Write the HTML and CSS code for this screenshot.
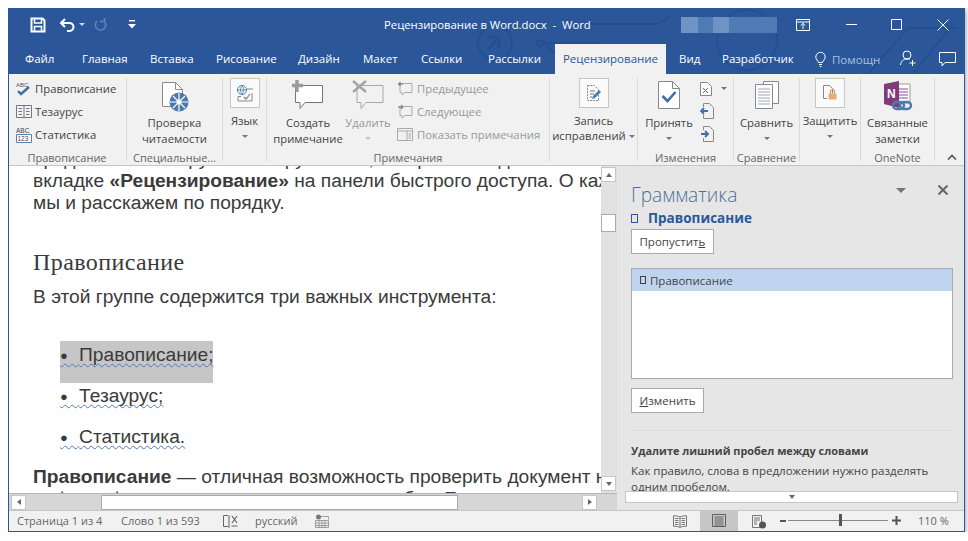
FILE: index.html
```html
<!DOCTYPE html>
<html lang="ru">
<head>
  <meta charset="UTF-8">
  <title>Рецензирование в Word.docx - Word</title>
  <link rel="stylesheet" href="styles.css">
</head>
<body>
  <div class="window">
    <svg class="circuit" viewBox="0 0 957 66" width="957" height="66" fill="none" stroke="#23508f" stroke-width="2">
      <circle cx="487" cy="35" r="17"/>
      <path d="M480 42l10-12M480 29h11v11" stroke-width="3"/>
      <circle cx="532" cy="35" r="3"/>
      <path d="M535 35h60M570 16h80l12-8M535 35l12 10"/>
      <circle cx="739" cy="32" r="30"/>
      <path d="M860 66l40-46h50M905 66l40-50"/>
    </svg>

    <div class="titlebar">
      <div class="quick">
        <svg width="16" height="16" viewBox="0 0 16 16" fill="none" stroke="#fff" stroke-width="2"><path d="M1.500 1.500h11l2 2v11h-13z"/><path d="M4.500 2v4h7V2M4.500 15V9.500h7V15" stroke-width="1.500"/></svg>
        <svg class="q-undo" width="17" height="14" viewBox="0 0 17 14" fill="none" stroke="#fff" stroke-width="2"><path d="M6 1L2 5l4 4"/><path d="M2 5h8a4 4 0 0 1 1 8H8"/></svg>
        <span class="q-caret"></span>
        <svg class="q-redo" width="14" height="14" viewBox="0 0 14 14" fill="none" stroke="#5f83b6" stroke-width="1.600"><path d="M3 3a5.200 5.200 0 1 0 7 0"/><path d="M6 3.500h4.500V0"/></svg>
        <svg class="q-more" width="8" height="9" viewBox="0 0 8 9" fill="#fff"><rect x="1" y="0" width="6" height="1.400"/><path d="M0 4h8L4 8.500z"/></svg>
      </div>
      <div class="doc-title">Рецензирование в Word.docx&nbsp; -&nbsp; Word</div>
      <div class="account">
        <i class="blur b1"></i><i class="blur b2"></i><i class="blur b3"></i><i class="blur b4"></i>
      </div>
      <div class="win-btns">
        <svg width="14" height="12" viewBox="0 0 14 12" fill="none" stroke="#fff"><path d="M.5.5h13v11H.5zM.5 3h13M7 10V4.500M4.800 6.500L7 4.300l2.200 2.200"/></svg>
        <svg class="w-min" width="11" height="11" viewBox="0 0 11 11" stroke="#fff"><path d="M0 5.500h11"/></svg>
        <svg class="w-max" width="11" height="11" viewBox="0 0 11 11" fill="none" stroke="#fff"><path d="M.5.5h10v10H.5z"/></svg>
        <svg class="w-close" width="12" height="12" viewBox="0 0 12 12" stroke="#fff"><path d="M.5.5l11 11M11.500.5l-11 11"/></svg>
      </div>
    </div>

    <div class="tabs">
      <span class="tab t-file">Файл</span>
      <span class="tab t-home">Главная</span>
      <span class="tab t-ins">Вставка</span>
      <span class="tab t-draw">Рисование</span>
      <span class="tab t-des">Дизайн</span>
      <span class="tab t-lay">Макет</span>
      <span class="tab t-ref">Ссылки</span>
      <span class="tab t-mail">Рассылки</span>
      <span class="tab active">Рецензирование</span>
      <span class="tab t-view">Вид</span>
      <span class="tab t-dev">Разработчик</span>
      <span class="tab-help">
        <svg width="11" height="15" viewBox="0 0 11 15" fill="none" stroke="#fff"><path d="M3.500 10.500C3 8.500 .8 7.500 .8 5a4.700 4.700 0 0 1 9.400 0c0 2.500-2.200 3.500-2.700 5.500zM4 12.500h3M4.500 14.500h2"/></svg>
        <span>Помощн</span>
      </span>
      <svg class="tab-person" width="17" height="17" viewBox="0 0 17 17" fill="none" stroke="#fff"><circle cx="7" cy="5" r="4"/><path d="M.5 15c.5-4 3-6 6.500-6 1 0 2 .2 2.500.5M12.500 10v6M9.500 13h6"/></svg>
      <svg class="tab-comment" width="17" height="15" viewBox="0 0 17 15" fill="none" stroke="#fff"><path d="M.5.5h16v10H6l-3 3.500v-3.500H.5z"/></svg>
    </div>

    <div class="ribbon">
      <div class="group g-spell">
        <div class="small-list">
          <div class="small-row">
            <svg width="16" height="16" viewBox="0 0 16 16"><text x="0" y="6" font-size="6" font-family="Liberation Sans" fill="#555">ABC</text><path d="M2 10l3 3 8-7" fill="none" stroke="#3d6fa8" stroke-width="2.400"/></svg>
            Правописание
          </div>
          <div class="small-row">
            <svg width="16" height="14" viewBox="0 0 16 14" fill="none" stroke="#777"><path d="M.5.5h15v12H.5zM8 .5v12"/><path d="M2.500 3.500h3.500M2.500 6.500h3.500M2.500 9.500h3.500M10 3.500h3.500M10 6.500h3.500M10 9.500h3.500" stroke="#5b7fa8"/></svg>
            Тезаурус
          </div>
          <div class="small-row">
            <svg width="16" height="16" viewBox="0 0 16 16"><text x="0" y="6" font-size="6.500" font-family="Liberation Sans" fill="#444">ABC</text><path d="M.5 7.500h15v8H.5z" fill="#fff" stroke="#5b7fa8"/><text x="1.500" y="14" font-size="6.500" font-family="Liberation Sans" fill="#444">123</text></svg>
            Статистика
          </div>
        </div>
        <div class="group-label">Правописание</div>
      </div>

      <div class="group g-read">
        <div class="big">
          <svg class="big-icon" width="30" height="30" viewBox="0 0 30 30" fill="none"><path d="M2.500 .5h13l7 7v17h-20z" stroke="#8a8a8a" fill="#fff"/><path d="M15.500 .5v7h7" stroke="#8a8a8a"/><circle cx="19" cy="20" r="9.500" fill="#4a7aae"/><circle cx="19" cy="20" r="2.500" fill="#fff"/><path d="M19 11v18M10 20h18M13 14l12 12M25 14L13 26" stroke="#fff" stroke-width="1.200"/></svg>
          <span>Проверка</span><span>читаемости</span>
        </div>
        <div class="group-label">Специальные...</div>
      </div>

      <div class="group g-lang">
        <div class="big boxed-big">
          <div class="icon-box">
            <svg width="18" height="18" viewBox="0 0 18 18" fill="none"><circle cx="6" cy="6" r="4.500" stroke="#4a7aae"/><path d="M1.500 6h9M6 1.500c-2 3-2 6 0 9M6 1.500c2 3 2 6 0 9" stroke="#4a7aae" stroke-width=".8"/><path d="M11 5h6M5 12.500H2v4.500h14v-8" stroke="#888"/><path d="M8 13l2 2 4-5" stroke="#5f8f5f" stroke-width="1.200"/></svg>
          </div>
          <span>Язык</span><i class="caret"></i>
        </div>
      </div>

      <div class="group g-notes">
        <div class="notes-main">
          <div class="big b-create">
            <svg class="big-icon" width="34" height="30" viewBox="0 0 34 30" fill="none"><path d="M4.500 5.500h27v17H14l-5 6v-6H4.500z" stroke="#777" fill="#fff"/><path d="M5 0v12M0 5.500h11" stroke="#9b9b9b" stroke-width="3.400" transform="translate(1)"/></svg>
            <span>Создать</span><span>примечание</span>
          </div>
          <div class="big b-delete muted">
            <svg class="big-icon" width="32" height="30" viewBox="0 0 32 30" fill="none"><path d="M5 5.500h26v17H14l-5 6v-6H5z" stroke="#a8a8a8" fill="#f1f1f1"/><path d="M1 1l13 11M14 1L1 12" stroke="#a5a5a5" stroke-width="2.400"/></svg>
            <span>Удалить</span><i class="caret faint"></i>
          </div>
          <div class="small-list muted n-list">
            <div class="small-row">
              <svg width="16" height="15" viewBox="0 0 16 15" fill="none" stroke="#aaa"><path d="M3 2.500h12v9H8l-3 2.500v-2.500H3z"/><path d="M6 3H1.500M3.500 1L1.500 3l2 2" stroke="#8c8c8c" stroke-width="1.300"/></svg>
              Предыдущее
            </div>
            <div class="small-row">
              <svg width="16" height="15" viewBox="0 0 16 15" fill="none" stroke="#aaa"><path d="M3 2.500h12v9H8l-3 2.500v-2.500H3z"/><path d="M1 3h5M4 1l2 2-2 2" stroke="#8c8c8c" stroke-width="1.300"/></svg>
              Следующее
            </div>
            <div class="small-row">
              <svg width="16" height="14" viewBox="0 0 16 14" fill="none" stroke="#aaa"><path d="M.5.5h15v12H.5zM.5 3h15M10 3v9.500M11.500 6h2.500M11.500 8h2.500M11.500 10h2.500"/></svg>
              Показать примечания
            </div>
          </div>
        </div>
        <div class="group-label">Примечания</div>
      </div>

      <div class="group g-track">
        <div class="big boxed-big">
          <div class="icon-box">
            <svg width="16" height="18" viewBox="0 0 16 18" fill="none"><path d="M1.500 1.500h7l4 4v11h-11z" stroke="#888" stroke-dasharray="2 1"/><path d="M4 7h5M4 10h4M4 13h2" stroke="#777"/><path d="M6 15l1-3 6-6 2 2-6 6z" fill="#4a7aae"/></svg>
          </div>
          <span>Запись</span><span class="tight">исправлений<i class="caret inline"></i></span>
        </div>
      </div>

      <div class="group g-changes">
        <div class="changes-main">
          <div class="big b-accept">
            <svg class="big-icon" width="24" height="30" viewBox="0 0 24 30" fill="none"><path d="M1.500 1.500h14l7 7v20h-21z" stroke="#888" fill="#fff"/><path d="M15.500 1.500v7h7" stroke="#888"/><path d="M5.500 16l5 5 8-9" stroke="#3d6fa8" stroke-width="2.600"/></svg>
            <span>Принять</span><i class="caret"></i>
          </div>
          <div class="mini-icons">
            <div class="mini-row">
              <svg width="12" height="14" viewBox="0 0 12 14" fill="none"><path d="M.5.5h7l4 4v9H.500z" stroke="#888" fill="#fff"/><path d="M3 6l5 5M8 6l-5 5" stroke="#b5533c"/></svg>
              <i class="caret"></i>
            </div>
            <svg width="14" height="16" viewBox="0 0 14 16" fill="none"><path d="M3.500 4V.5h6l4 4v11h-10V12" stroke="#888"/><path d="M8 8H1M4 5L1 8l3 3" stroke="#3d6fa8" stroke-width="1.800"/></svg>
            <svg width="14" height="16" viewBox="0 0 14 16" fill="none"><path d="M3.500 4V.5h6l4 4v11h-10V12" stroke="#888"/><path d="M1 8h7M5 5l3 3-3 3" stroke="#3d6fa8" stroke-width="1.800"/></svg>
          </div>
        </div>
        <div class="group-label">Изменения</div>
      </div>

      <div class="group g-compare">
        <div class="big">
          <svg class="big-icon" width="26" height="30" viewBox="0 0 26 30" fill="none"><path d="M9.500 1.500h15v22h-15z" stroke="#888" fill="#fff"/><path d="M1.500 4.500h17v24h-17z" stroke="#7c8da0" fill="#fff"/><path d="M4 9h12M4 12h12M4 15h12M4 18h12M4 21h12M4 24h12" stroke="#a5a5a5"/></svg>
          <span>Сравнить</span><i class="caret"></i>
        </div>
        <div class="group-label">Сравнение</div>
      </div>

      <div class="group g-protect">
        <div class="big boxed-big">
          <div class="icon-box">
            <svg width="16" height="18" viewBox="0 0 16 18" fill="none"><path d="M1.500 1.500h6l3 3v5M5 14.500H1.500v-13" stroke="#888"/><rect x="6.500" y="9.500" width="8" height="6" fill="#e0b07a"/><path d="M8.500 9.500V7.500a2 2 0 0 1 4 0v2" stroke="#c99a64" stroke-width="1.200"/></svg>
          </div>
          <span>Защитить</span><i class="caret"></i>
        </div>
      </div>

      <div class="group g-onenote">
        <div class="big">
          <svg class="big-icon" width="30" height="32" viewBox="0 0 30 32" fill="none"><path d="M14 3h13v19H14z" fill="#fff" stroke="#999"/><path d="M16 8h9M16 11h9M16 14h9M16 17h9" stroke="#8b4a8e"/><path d="M1 3l15-3v27L1 23z" fill="#80397b"/><text x="4" y="17" font-size="12" font-weight="700" font-family="Liberation Sans" fill="#fff">N</text><rect x="10" y="21" width="11" height="7" rx="3.500" stroke="#4a7aae" stroke-width="2.400"/><rect x="17" y="21" width="11" height="7" rx="3.500" stroke="#4a7aae" stroke-width="2.400"/></svg>
          <span>Связанные</span><span>заметки</span>
        </div>
        <div class="group-label">OneNote</div>
      </div>

      <div class="collapse">
        <svg width="10" height="6" viewBox="0 0 10 6" fill="none" stroke="#555" stroke-width="1.600"><path d="M1 5.500l4-4 4 4"/></svg>
      </div>
    </div>

    <div class="workspace">
      <div class="doc-col">
        <div class="doc-row">
          <div class="page">
            <p class="first">представлены в группе инструментов, которые находятся во</p>
            <p>вкладке <b>«Рецензирование»</b> на панели быстрого доступа. О каждом из них</p>
            <p>мы и расскажем по порядку.</p>
            <h2>Правописание</h2>
            <p>В этой группе содержится три важных инструмента:</p>
            <ul>
              <li class="hl"><span><i class="dot">●</i>Правописание;</span></li>
              <li><span><i class="dot">●</i>Тезаурус;</span></li>
              <li><span><i class="dot">●</i>Статистика.</span></li>
            </ul>
            <p><b>Правописание</b> — отличная возможность проверить документ на наличие</p>
            <p>орфографических и пунктуационных ошибок. Его</p>
          </div>
          <div class="vscroll">
            <div class="sb-btn"><i class="arr up"></i></div>
            <div class="v-track"><div class="v-thumb"></div></div>
            <div class="sb-btn"><i class="arr down"></i></div>
          </div>
        </div>
        <div class="hscroll">
          <div class="sb-btn"><i class="arr left"></i></div>
          <div class="h-track"><div class="h-thumb"></div></div>
          <div class="sb-btn"><i class="arr right"></i></div>
        </div>
      </div>

      <div class="pane">
        <div class="pane-head">
          <span class="pane-title">Грамматика</span>
          <i class="pane-menu"></i>
          <svg class="pane-close" width="10" height="10" viewBox="0 0 10 10" stroke="#666" stroke-width="2"><path d="M.5.5l9 9M9.500.5l-9 9"/></svg>
        </div>
        <div class="pane-sub"><i class="tofu"></i>Правописание</div>
        <button class="pane-btn">Пропустит<u>ь</u></button>
        <div class="listbox">
          <div class="list-sel"><i class="tofu small"></i>Правописание</div>
        </div>
        <button class="pane-btn"><u>И</u>зменить</button>
        <div class="pane-rule"></div>
        <div class="pane-bold">Удалите лишний пробел между словами</div>
        <div class="pane-text">Как правило, слова в предложении нужно разделять одним пробелом.</div>
        <div class="pane-more"><i class="arr down"></i></div>
      </div>
    </div>

    <div class="statusbar">
      <span class="st st-page">Страница 1 из 4</span>
      <span class="st st-word">Слово 1 из 593</span>
      <svg class="st-book" width="16" height="14" viewBox="0 0 16 14" fill="none" stroke="#666"><path d="M6 1.500H1.500v11H6l1 1V2.500zM7 2.500l1-1"/><path d="M10 2l5 7M15 2l-5 7M9.500 12h6" stroke-width="1.200"/></svg>
      <span class="st st-lang">русский</span>
      <svg class="st-macro" width="14" height="14" viewBox="0 0 14 14" fill="none"><circle cx="3.500" cy="3" r="2.500" fill="#777"/><path d="M.5 6.500h13v7H.5zM6 2.500h7.500v3M.5 9h13M.5 11.500h13M4 6.500v7M7 6.500v7M10 6.500v7" stroke="#8a8a8a" stroke-width=".8"/></svg>
      <div class="views">
        <svg width="14" height="13" viewBox="0 0 14 13" fill="none" stroke="#777"><path d="M7 2C5.500 1 3 .8.500.8v10.500c2.500 0 5 .2 6.500 1.200 1.500-1 4-1.200 6.500-1.200V.8C11 .8 8.500 1 7 2zM7 2v10.500M2 3.500h3.500M2 5.500h3.500M2 7.500h3.500M2 9.500h3.500M8.500 3.500H12M8.500 5.500H12M8.500 7.500H12M8.500 9.500H12"/></svg>
        <div class="view-on">
          <svg width="14" height="13" viewBox="0 0 14 13" fill="none" stroke="#555"><path d="M.5.5h13v12H.5zM2.500 3h9M2.500 5h9M2.500 7h9M2.500 9h9M2.500 11h9" stroke-width=".9"/></svg>
        </div>
        <svg width="16" height="14" viewBox="0 0 16 14" fill="none" stroke="#777"><path d="M1.500.5h9v12h-9zM3 3h6M3 5h6M3 7h3M3 9h3"/><circle cx="11.500" cy="10" r="3.500" fill="#555" stroke="none"/></svg>
      </div>
      <div class="zoom">
        <i class="z-minus"></i>
        <div class="z-line"><i class="z-thumb"></i></div>
        <svg width="9" height="9" viewBox="0 0 9 9" stroke="#555" stroke-width="2"><path d="M0 4.500h9M4.500 0v9"/></svg>
        <span class="st z-val">110 %</span>
      </div>
    </div>
  </div>
</body>
</html>
```

FILE: styles.css
```css
body {
  margin: 8px 0 0 8px;
  background: #fff;
  font-family: "Open Sans", "Noto Sans", sans-serif;
  color: #444;
  overflow: hidden;
}

.window {
  position: relative;
  display: flex;
  flex-direction: column;
  width: 957px;
  height: 524px;
  overflow: hidden;
  background: #2b579a;
  box-shadow: 0 1px 6px rgba(40, 60, 90, 0.6);
}
/* thin blue frame over the content */
.window::after {
  content: "";
  position: absolute;
  top: 0;
  right: 0;
  bottom: 0;
  left: 0;
  border: 1px solid #2b579a;
  pointer-events: none;
}

.circuit {
  position: absolute;
  top: 0;
  left: 0;
}

/* title bar */
.titlebar {
  position: relative;
  display: flex;
  align-items: center;
  height: 33px;
  flex: none;
  color: #fff;
}
.quick {
  display: flex;
  align-items: center;
  width: 376px;
  padding-left: 22px;
  box-sizing: border-box;
}
.q-undo {
  margin-left: 13px;
}
.q-caret {
  width: 0;
  height: 0;
  margin-left: 3px;
  border: 3px solid transparent;
  border-top: 3px solid #c9d6e8;
  border-bottom: 0;
}
.q-redo {
  margin-left: 9px;
}
.q-more {
  margin-left: 20px;
}
.doc-title {
  width: 297px;
  font-size: 11.3px;
  white-space: nowrap;
}
.account {
  display: flex;
  width: 96px;
  height: 16px;
}
.blur {
  display: block;
  height: 16px;
}
.b1 { width: 17px; background: #6f93c2; }
.b2 { width: 15px; background: #4f7ab3; }
.b3 { width: 16px; background: #6f93c2; }
.b4 { width: 48px; background: #4f7ab3; }
.win-btns {
  display: flex;
  align-items: center;
  margin-left: 19px;
}
.w-min { margin-left: 36px; }
.w-max { margin-left: 34px; }
.w-close { margin-left: 35px; }

/* tabs */
.tabs {
  position: relative;
  display: flex;
  align-items: flex-end;
  height: 33px;
  flex: none;
}
.tab {
  height: 30px;
  line-height: 29px;
  font-size: 11.5px;
  color: #fff;
  white-space: nowrap;
}
.t-file { width: 57px; margin-left: 17px; }
.t-home { width: 68px; }
.t-ins { width: 66px; }
.t-draw { width: 82px; }
.t-des { width: 65px; }
.t-lay { width: 58px; }
.t-ref { width: 67px; }
.t-mail { width: 67px; }
.tab.active {
  width: 111px;
  text-align: center;
  background: #f1f1f1;
  color: #2b579a;
}
.t-view { width: 43px; margin-left: 13px; }
.t-dev { width: 93px; }
.tab-help {
  display: flex;
  align-items: center;
  gap: 6px;
  height: 30px;
  width: 85px;
  font-size: 11.5px;
  color: #a9c0e0;
}
.tab-person {
  margin-bottom: 7px;
}
.tab-comment {
  margin-left: 22px;
  margin-bottom: 7px;
}

/* ribbon */
.ribbon {
  display: flex;
  height: 92px;
  flex: none;
  box-sizing: border-box;
  padding-top: 4px;
  padding-bottom: 4px;
  background: #f1f1f1;
  border-bottom: 1px solid #c6c6c6;
  font-size: 11.3px;
  color: #444;
}
.group {
  display: flex;
  flex-direction: column;
  box-sizing: border-box;
  border-right: 1px solid #dadada;
  flex: none;
}
.group-label {
  margin-top: auto;
  margin-bottom: -5px;
  height: 16px;
  line-height: 16px;
  text-align: center;
  font-size: 11px;
  color: #666;
  white-space: nowrap;
}
.g-spell { width: 119px; }
.g-read { width: 96px; }
.g-lang { width: 44px; }
.g-notes { width: 283px; }
.g-track { width: 88px; }
.g-changes { width: 96px; }
.g-compare { width: 66px; }
.g-protect { width: 61px; }
.g-onenote { width: 74px; }
.collapse {
  flex: 1;
  display: flex;
  justify-content: center;
  align-items: flex-end;
  padding-left: 4px;
  padding-bottom: 1px;
}

.small-list {
  display: flex;
  flex-direction: column;
  margin-top: -1px;
}
.small-row {
  display: flex;
  align-items: center;
  gap: 3px;
  height: 23px;
  white-space: nowrap;
}
.g-spell .small-list {
  padding-left: 8px;
}
.big {
  display: flex;
  flex-direction: column;
  align-items: center;
  line-height: 16px;
  white-space: nowrap;
}
.big-icon {
  margin-top: 2px;
  margin-bottom: 5px;
}
.g-read .big-icon {
  margin-top: 4px;
  margin-bottom: 3px;
}
.g-onenote .big-icon {
  margin-top: 3px;
  margin-bottom: 2px;
}
.icon-box {
  display: flex;
  justify-content: center;
  align-items: center;
  box-sizing: border-box;
  width: 30px;
  height: 30px;
  margin-bottom: 5px;
  background: #fafafa;
  border: 1px solid #c6c6c6;
}
.tight {
  margin-top: -1px;
}
.caret {
  display: block;
  width: 0;
  height: 0;
  margin-top: 6px;
  border-left: 3px solid transparent;
  border-right: 3px solid transparent;
  border-top: 3px solid #777;
}
.caret.faint {
  border-top-color: #c4c4c4;
}
.caret.inline {
  display: inline-block;
  margin: 0 0 2px 3px;
}

.notes-main {
  display: flex;
}
.b-create {
  width: 68px;
  margin-left: 7px;
}
.b-delete {
  width: 46px;
  margin-left: 3px;
}
.muted {
  color: #999;
}
.n-list {
  margin-left: 6px;
}
.n-list .small-row {
  gap: 4px;
}

.changes-main {
  display: flex;
}
.b-accept {
  width: 62px;
}
.mini-icons {
  display: flex;
  flex-direction: column;
  gap: 7px;
  padding-top: 4px;
}
.mini-row {
  display: flex;
  align-items: flex-start;
  gap: 9px;
}
.mini-row .caret {
  margin-top: 5px;
}

/* document */
.workspace {
  display: flex;
  flex: 1;
  min-height: 0;
  background: #e6e6e6;
}
.doc-col {
  display: flex;
  flex-direction: column;
  width: 609px;
  flex: none;
  background: #fff;
}
.doc-row {
  display: flex;
  flex: 1;
  min-height: 0;
}
.page {
  flex: 1;
  min-width: 0;
  overflow: hidden;
  padding-left: 25px;
  font-family: "Liberation Sans", Arial, sans-serif;
  font-size: 19.2px;
  line-height: 22px;
  color: #3a3a3a;
  white-space: nowrap;
}
.page p {
  margin: 0;
}
.page .first {
  margin-top: -18px;
}
.page h2 {
  margin: 30px 0 6px;
  height: 36px;
  font-family: "Liberation Serif", serif;
  font-size: 24px;
  font-weight: 400;
  letter-spacing: 0.4px;
  line-height: 36px;
}
.page ul {
  list-style: none;
  margin: 0;
  padding: 33px 0 0 27px;
}
.page li {
  height: 41px;
  line-height: 28px;
}
.page li span {
  text-decoration: underline wavy #4f78c0 1px;
  text-underline-offset: 2px;
  text-decoration-skip-ink: none;
}
.dot {
  font-style: normal;
  font-size: 13px;
  letter-spacing: 11.2px;
  vertical-align: 1px;
}
.page li.hl {
  width: 153px;
  height: 42px;
  margin-bottom: -1px;
  background: #c6c6c6;
}
.page ul + p {
  margin-top: 2px;
}

.vscroll {
  display: flex;
  flex-direction: column;
  width: 16px;
  flex: none;
  box-sizing: border-box;
  background: #e1e1e1;
  padding: 1px 0 2px;
}
.v-track {
  flex: 1;
  padding-top: 32px;
}
.v-thumb {
  box-sizing: border-box;
  width: 15px;
  height: 18px;
  background: #fff;
  border: 1px solid #ababab;
}
.sb-btn {
  display: flex;
  justify-content: center;
  align-items: center;
  box-sizing: border-box;
  width: 15px;
  height: 15px;
  background: #fff;
  border: 1px solid #c6c6c6;
  flex: none;
}
.arr {
  display: block;
  width: 0;
  height: 0;
  border: 3px solid transparent;
}
.arr.up {
  border-top: 0;
  border-bottom: 4px solid #666;
}
.arr.down {
  border-bottom: 0;
  border-top: 4px solid #666;
}
.arr.left {
  border-left: 0;
  border-right: 4px solid #666;
}
.arr.right {
  border-right: 0;
  border-left: 4px solid #666;
}
.hscroll {
  display: flex;
  align-items: center;
  height: 17px;
  flex: none;
  padding-left: 3px;
  padding-right: 20px;
  background: #d6d6d6;
  border-top: 1px solid #b5b5b5;
  box-sizing: border-box;
}
.h-track {
  flex: 1;
  padding-left: 75px;
}
.h-thumb {
  box-sizing: border-box;
  width: 357px;
  height: 15px;
  background: #fff;
  border: 1px solid #ababab;
}

/* grammar pane */
.pane {
  position: relative;
  flex: 1;
  overflow: hidden;
  padding: 12px 12px 0 14px;
  font-size: 11.5px;
  color: #444;
}
.pane-head {
  display: flex;
  align-items: center;
  height: 32px;
}
.pane-title {
  font-size: 19.2px;
  font-weight: 300;
  color: #4c7099;
}
.pane-menu {
  width: 0;
  height: 0;
  margin-left: 159px;
  margin-bottom: 8px;
  border-left: 5px solid transparent;
  border-right: 5px solid transparent;
  border-top: 5px solid #777;
}
.pane-close {
  margin-left: 32px;
  margin-bottom: 8px;
}
.pane-sub {
  display: flex;
  align-items: center;
  height: 16px;
  margin-bottom: 3px;
  font-size: 13.5px;
  font-weight: 700;
  color: #2b579a;
}
.tofu {
  display: block;
  box-sizing: border-box;
  width: 7px;
  height: 9px;
  margin-right: 10px;
  border: 1px solid #2b579a;
}
.tofu.small {
  width: 6px;
  height: 8px;
  margin-right: 4px;
  border-color: #444;
}
.pane-btn {
  display: block;
  box-sizing: border-box;
  height: 25px;
  padding: 0 7.5px;
  background: #fff;
  border: 1px solid #ababab;
  font-family: inherit;
  font-size: 11.5px;
  color: #444;
}
.listbox {
  box-sizing: border-box;
  width: 322px;
  height: 111px;
  margin: 14px 0 9px;
  background: #fff;
  border: 1px solid #ababab;
}
.list-sel {
  display: flex;
  align-items: center;
  height: 22px;
  padding-left: 8px;
  background: #bfd5ef;
}
.pane-rule {
  margin-top: 17px;
  height: 1px;
  background: #dcdcdc;
}
.pane-bold {
  margin-top: 12px;
  font-weight: 700;
  font-size: 10.9px;
  line-height: 16px;
  white-space: nowrap;
}
.pane-text {
  margin-top: 4px;
  font-size: 11.5px;
  line-height: 16px;
}
.pane-more {
  position: absolute;
  left: 8px;
  bottom: 7px;
  display: flex;
  justify-content: center;
  align-items: center;
  box-sizing: border-box;
  width: 333px;
  height: 12px;
  background: #fff;
  border: 1px solid #c6c6c6;
}

/* status bar */
.statusbar {
  display: flex;
  align-items: center;
  height: 22px;
  flex: none;
  padding-bottom: 2px;
  background: #f1f1f1;
  border-top: 1px solid #c6c6c6;
  box-sizing: border-box;
  font-size: 11px;
  color: #666;
}
.st {
  white-space: nowrap;
}
.st-page { margin-left: 9px; width: 104px; }
.st-word { width: 101px; }
.st-book { margin-right: 17px; }
.st-lang { width: 60px; }
.views {
  display: flex;
  align-items: center;
  align-self: stretch;
  margin-left: 344px;
  margin-bottom: -2px;
}
.view-on {
  display: flex;
  justify-content: center;
  align-items: center;
  align-self: stretch;
  box-sizing: border-box;
  width: 38px;
  padding-bottom: 2px;
  margin: 0 13px;
  background: #c6c6c6;
}
.zoom {
  display: flex;
  align-items: center;
  margin-left: 13px;
}
.z-minus {
  display: block;
  width: 6px;
  height: 2px;
  background: #555;
}
.z-line {
  position: relative;
  width: 100px;
  height: 1px;
  margin: 0 4px 0 2px;
  background: #888;
}
.z-thumb {
  position: absolute;
  left: 51px;
  top: -6px;
  width: 3px;
  height: 12px;
  background: #555;
}
.z-val {
  margin-left: 17px;
}
```
